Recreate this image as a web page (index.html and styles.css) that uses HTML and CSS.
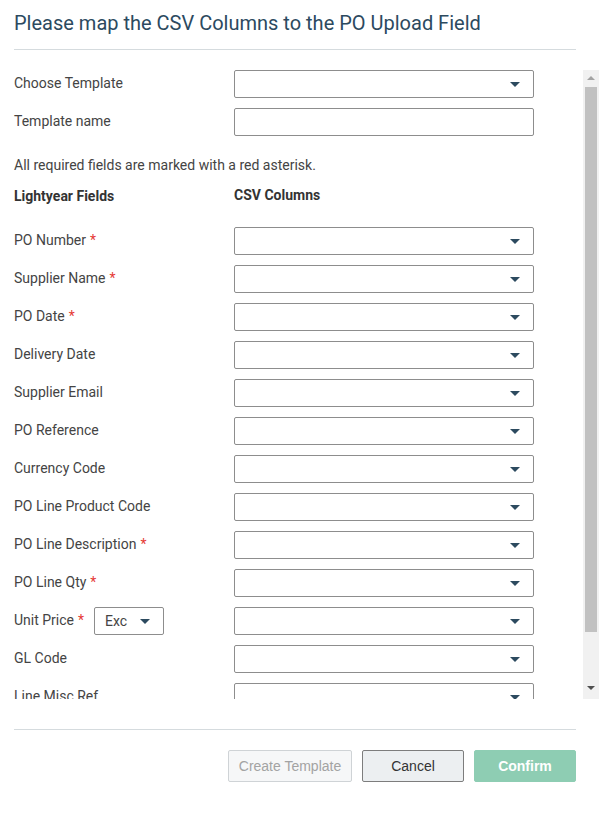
FILE: index.html
```html
<!DOCTYPE html>
<html lang="en">

<head>
    <meta charset="UTF-8">
    <meta name="viewport" content="width=device-width, initial-scale=1.0">
    <title>PO Upload Mapping</title>
    <link rel="stylesheet" href="styles.css">
</head>

<body>

    <div class="modal">
        <div class="modal-header">
            <h1>Please map the CSV Columns to the PO Upload Field</h1>
        </div>

        <div class="modal-body">
            <div class="body-content">
                <div class="field-row">
                    <label class="field-label">Choose Template</label>
                    <div class="dropdown"><span class="caret"></span></div>
                </div>
                <div class="field-row">
                    <label class="field-label">Template name</label>
                    <input type="text" class="text-input">
                </div>

                <p class="note">All required fields are marked with a red asterisk.</p>

                <div class="column-heads">
                    <span class="head-left">Lightyear Fields</span>
                    <span class="head-right">CSV Columns</span>
                </div>

                <!-- Mapping rows -->
                <div class="field-row">
                    <label class="field-label">PO Number <span class="req">*</span></label>
                    <div class="dropdown"><span class="caret"></span></div>
                </div>
                <div class="field-row">
                    <label class="field-label">Supplier Name <span class="req">*</span></label>
                    <div class="dropdown"><span class="caret"></span></div>
                </div>
                <div class="field-row">
                    <label class="field-label">PO Date <span class="req">*</span></label>
                    <div class="dropdown"><span class="caret"></span></div>
                </div>
                <div class="field-row">
                    <label class="field-label">Delivery Date</label>
                    <div class="dropdown"><span class="caret"></span></div>
                </div>
                <div class="field-row">
                    <label class="field-label">Supplier Email</label>
                    <div class="dropdown"><span class="caret"></span></div>
                </div>
                <div class="field-row">
                    <label class="field-label">PO Reference</label>
                    <div class="dropdown"><span class="caret"></span></div>
                </div>
                <div class="field-row">
                    <label class="field-label">Currency Code</label>
                    <div class="dropdown"><span class="caret"></span></div>
                </div>
                <div class="field-row">
                    <label class="field-label">PO Line Product Code</label>
                    <div class="dropdown"><span class="caret"></span></div>
                </div>
                <div class="field-row">
                    <label class="field-label">PO Line Description <span class="req">*</span></label>
                    <div class="dropdown"><span class="caret"></span></div>
                </div>
                <div class="field-row">
                    <label class="field-label">PO Line Qty <span class="req">*</span></label>
                    <div class="dropdown"><span class="caret"></span></div>
                </div>
                <div class="field-row">
                    <label class="field-label">Unit Price <span class="req">*</span>
                        <span class="mini-dropdown">Exc <span class="caret"></span></span>
                    </label>
                    <div class="dropdown"><span class="caret"></span></div>
                </div>
                <div class="field-row">
                    <label class="field-label">GL Code</label>
                    <div class="dropdown"><span class="caret"></span></div>
                </div>
                <div class="field-row">
                    <label class="field-label">Line Misc Ref</label>
                    <div class="dropdown"><span class="caret"></span></div>
                </div>
                <div class="field-row">
                    <label class="field-label">Tax Code</label>
                    <div class="dropdown"><span class="caret"></span></div>
                </div>
            </div>

            <!-- Scrollbar -->
            <div class="scrollbar">
                <div class="sb-btn"><span class="sb-up"></span></div>
                <div class="sb-thumb"></div>
                <div class="sb-btn sb-btn-bottom"><span class="sb-down"></span></div>
            </div>
        </div>

        <div class="modal-footer">
            <button class="btn btn-disabled">Create Template</button>
            <button class="btn btn-cancel">Cancel</button>
            <button class="btn btn-confirm">Confirm</button>
        </div>
    </div>

</body>

</html>
```

FILE: styles.css
```css
body {
    margin: 0;
    background-color: #fff;
    font-family: Roboto, "Liberation Sans", Arial, sans-serif;
    font-size: 14px;
    color: #444;
}

.modal {
    width: 599px;
    height: 819px;
}

/* Header */
.modal-header {
    margin: 0 23px 0 14px;
    padding: 11px 0 14px 0;
    border-bottom: 1px solid #d5dbde;
}

    .modal-header h1 {
        margin: 0;
        font-size: 20px;
        line-height: 24px;
        font-weight: 400;
        color: #2c4a5f;
    }

/* Scrolling body */
.modal-body {
    margin-top: 20px;
    height: 629px;
    display: flex;
}

.body-content {
    flex: 1;
    overflow: hidden;
    padding-left: 14px;
}

.scrollbar {
    width: 16px;
    flex-shrink: 0;
    display: flex;
    flex-direction: column;
    background-color: #f1f1f1;
}

    .scrollbar .sb-btn {
        height: 16px;
        display: flex;
        align-items: center;
        justify-content: center;
    }

    .scrollbar .sb-btn-bottom {
        margin-top: auto;
        height: 22px;
    }

    .scrollbar .sb-thumb {
        height: 545px;
        margin: 1px 2px 0 2px;
        background-color: #c1c1c1;
    }

.sb-up {
    width: 0;
    height: 0;
    border-left: 4px solid transparent;
    border-right: 4px solid transparent;
    border-bottom: 4px solid #a3a3a3;
}

.sb-down {
    width: 0;
    height: 0;
    border-left: 4px solid transparent;
    border-right: 4px solid transparent;
    border-top: 4px solid #505050;
}

.field-row {
    display: flex;
    align-items: center;
    height: 28px;
    margin-bottom: 10px;
}

.field-label {
    width: 220px;
    flex-shrink: 0;
    display: flex;
    align-items: center;
    line-height: 20px;
    margin-top: -2px;
}

.req {
    color: #e53935;
    margin-left: 4px;
}

.dropdown,
.text-input {
    width: 300px;
    height: 28px;
    box-sizing: border-box;
    border: 1px solid #8d8d8d;
    border-radius: 2px;
    background-color: #fff;
}

.dropdown {
    display: flex;
    align-items: center;
    justify-content: flex-end;
    padding-right: 13px;
}

.text-input {
    margin: 0;
    padding: 0 8px;
    font-family: inherit;
    font-size: 14px;
    outline: none;
}

.caret {
    width: 0;
    height: 0;
    border-left: 5px solid transparent;
    border-right: 5px solid transparent;
    border-top: 5px solid #2c4a5f;
}

.mini-dropdown {
    display: inline-flex;
    align-items: center;
    justify-content: space-between;
    width: 70px;
    height: 28px;
    box-sizing: border-box;
    margin: 2px 0 0 10px;
    padding: 0 13px 0 10px;
    border: 1px solid #8d8d8d;
    border-radius: 2px;
    color: #444;
}

.note {
    margin: 19px 0 11px 0;
    line-height: 20px;
}

.column-heads {
    display: flex;
    line-height: 20px;
    font-weight: 700;
    color: #333;
    margin-bottom: 21px;
}

    .column-heads .head-left {
        width: 220px;
    }

    .column-heads .head-right {
        position: relative;
        top: -1px;
    }

/* Footer */
.modal-footer {
    margin: 30px 23px 0 14px;
    padding-top: 20px;
    border-top: 1px solid #d5dbde;
    display: flex;
    justify-content: flex-end;
    gap: 10px;
}

.btn {
    height: 32px;
    padding: 0;
    border-radius: 2px;
    font-family: "Liberation Sans", Arial, sans-serif;
    font-size: 14px;
    cursor: pointer;
}

.btn-disabled {
    width: 124px;
    background-color: #f6f7f8;
    border: 1px solid #cfd3d6;
    color: #a3a3a3;
}

.btn-cancel {
    width: 102px;
    background-color: #eceff1;
    border: 1px solid #7d7d7d;
    color: #333;
}

.btn-confirm {
    width: 102px;
    background-color: #8ecdb3;
    border: 1px solid #8ecdb3;
    color: #fff;
    font-weight: 700;
}
```
